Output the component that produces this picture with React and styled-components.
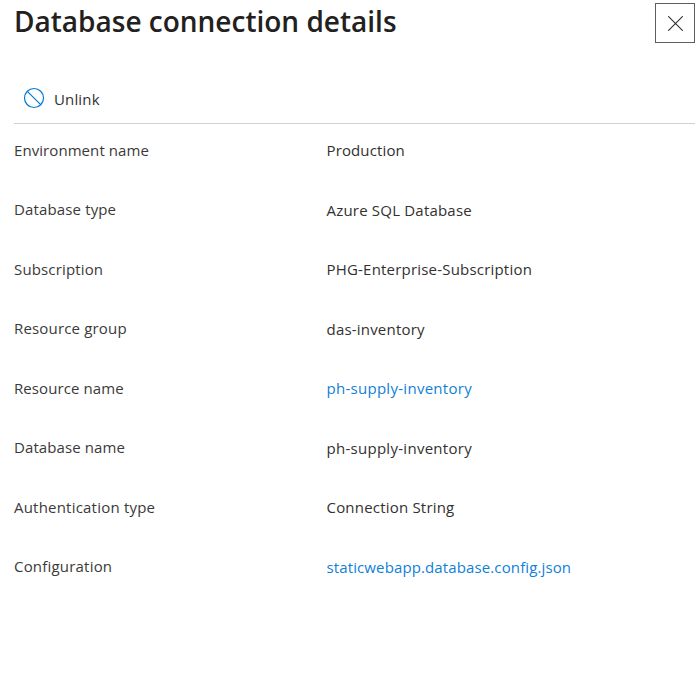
import React from "react";
import styled, { createGlobalStyle } from "styled-components";

const Global = createGlobalStyle`
  * { box-sizing: border-box; }
  body { margin: 0; background: #fff; overflow: hidden; font-family: "Segoe UI", "Open Sans", "Noto Sans", sans-serif; color: #323130; }
`;
const Panel = styled.main`
  height: 676px;
  padding: 0 5px 0 14px;
`;
const Header = styled.header`
  display: flex;
  justify-content: space-between;
  align-items: flex-start;
  height: 76px;
  padding-top: 3px;
`;
const Title = styled.h1`
  margin: 0;
  font-size: 28px;
  line-height: 36px;
  font-weight: 600;
  color: #222120;
  white-space: nowrap;
`;
const Text = styled.span`
  display: inline-block;
  white-space: nowrap;
  letter-spacing: ${(p) => p.$tracking || 0}px;
`;
const CloseButton = styled.button`
  width: 40px;
  height: 40px;
  padding: 1px 0 0 1px;
  display: grid;
  place-items: center;
  border: 1px solid #605e5c;
  background: #fff;
`;
const Toolbar = styled.div`
  height: 48px;
  display: flex;
  align-items: center;
  border-bottom: 1px solid #d2d0ce;
  padding: 0 0 3px 9px;
`;
const Command = styled.button`
  display: flex;
  align-items: center;
  gap: 9px;
  padding: 0;
  border: 0;
  background: none;
  font: inherit;
  font-size: 15px;
  line-height: 22px;
  color: #323130;

  span {
    padding-top: 1px;
  }
`;
const Details = styled.dl`
  margin: 14px 0 0;
`;
const Row = styled.div`
  display: grid;
  grid-template-columns: 312.5px 1fr;
  height: 59.5px;
  font-size: 15px;
  line-height: 24px;
`;
const Label = styled.dt`
  margin-top: -0.25px;
  color: #3b3a39;
`;
const Value = styled.dd`
  margin: 0;
`;
const Link = styled.a`
  color: #0f7fd8;
  text-decoration: none;
`;

const rows = [
  { label: "Environment name", value: "Production", lt: 0.07, vt: 0.13 },
  { label: "Database type", value: "Azure SQL Database", lt: 0.14, vt: 0.2 },
  { label: "Subscription", value: "PHG-Enterprise-Subscription", lt: 0.15, vt: 0.2 },
  { label: "Resource group", value: "das-inventory", lt: 0.17, vt: 0.2 },
  { label: "Resource name", value: "ph-supply-inventory", lt: 0.09, vt: 0.28, link: true },
  { label: "Database name", value: "ph-supply-inventory", lt: 0.09, vt: 0.28 },
  { label: "Authentication type", value: "Connection String", lt: 0.21, vt: 0.2 },
  { label: "Configuration", value: "staticwebapp.database.config.json", lt: 0.2, vt: 0.12, link: true },
];

export default function App() {
  return (
    <Panel>
      <Global />
      <Header>
        <Title>Database connection details</Title>
        <CloseButton aria-label="Close">
          <svg width="15" height="15" viewBox="0 0 15 15" fill="none" stroke="#323130" strokeWidth="1.1">
            <path d="M.2.2l14.6 14.6M14.8.2L.2 14.8" />
          </svg>
        </CloseButton>
      </Header>
      <Toolbar>
        <Command>
          <svg width="22" height="22" viewBox="0 0 22 22" fill="none" stroke="#0078d4" strokeWidth="1.2">
            <circle cx="11" cy="11" r="9.5" />
            <path d="M4.3 4.3l13.4 13.4" />
          </svg>
          <Text $tracking={0.15}>Unlink</Text>
        </Command>
      </Toolbar>
      <Details>
        {rows.map(({ label, value, lt, vt, link }) => (
          <Row key={label}>
            <Label><Text $tracking={lt}>{label}</Text></Label>
            <Value><Text $tracking={vt}>{link ? <Link>{value}</Link> : value}</Text></Value>
          </Row>
        ))}
      </Details>
    </Panel>
  );
}
